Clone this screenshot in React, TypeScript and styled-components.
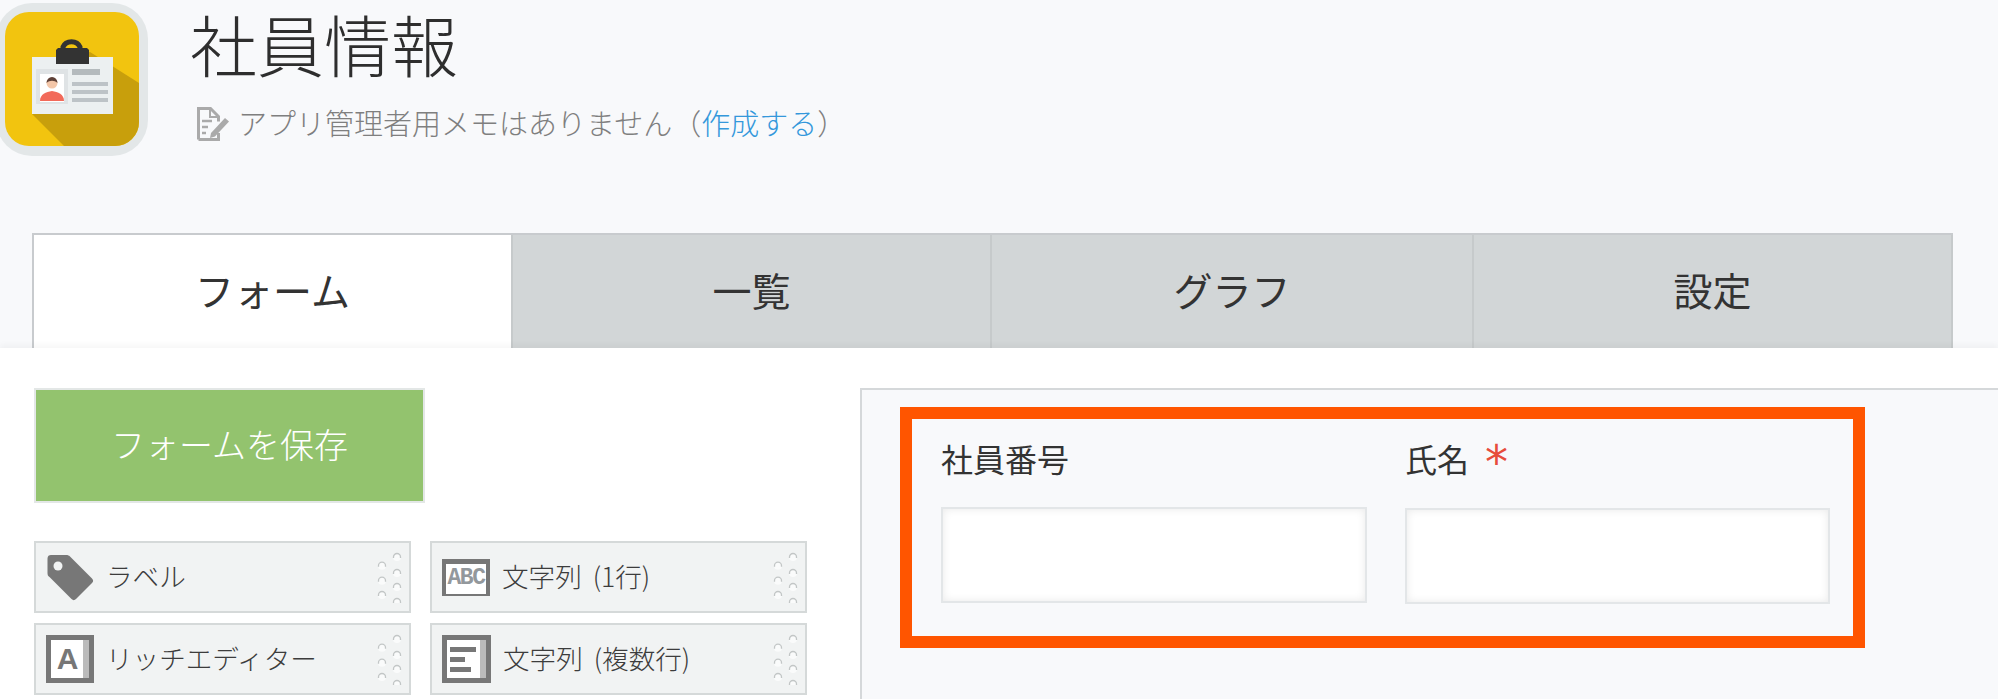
import React from 'react';
import styled, { createGlobalStyle } from 'styled-components';

const GlobalStyle = createGlobalStyle`
  html, body {
    margin: 0;
    height: 100%;
    overflow: hidden;
    background: #f8f9fb;
    font-family: "Noto Sans CJK JP", "Noto Sans", sans-serif;
    font-weight: 300;
    color: #333;
  }
  * { box-sizing: border-box; }
`;

const Page = styled.div`
  display: flex;
  flex-direction: column;
  height: 100vh;
  overflow: hidden;
`;

const Header = styled.header`
  display: flex;
  flex: 0 0 233px;
  align-items: flex-start;
`;

const AppIcon = styled.svg`
  flex: 0 0 152px;
  width: 152px;
  height: 153px;
  margin: 3px 42px 0 -4px;
`;

const TitleBlock = styled.div`
  flex: 1;
  padding-top: 3px;
`;

const Title = styled.h1`
  margin: 0 0 24px;
  font-size: 67px;
  line-height: 80px;
  font-weight: 300;
  color: #2e2e2e;
`;

const MemoRow = styled.div`
  display: flex;
  align-items: flex-start;
  gap: 8px;
  margin: 0 0 0 7px;
  height: 34px;
  font-size: 29px;
  line-height: 30px;
  color: #7f7f7f;
`;

const MemoLink = styled.a`
  color: #3498db;
`;

const Tabs = styled.nav`
  display: grid;
  grid-template-columns: 479px 479px 482px 481px;
  flex: 0 0 115px;
  margin: 0 45px 0 32px;
  border-top: 2px solid #c8cbce;
`;

const Tab = styled.div<{ $active?: boolean }>`
  display: flex;
  align-items: center;
  justify-content: center;
  padding-bottom: 6px;
  font-size: 39px;
  font-weight: 400;
  background: ${({ $active }) => ($active ? '#fff' : '#d2d6d7')};
  border-left: 2px solid ${({ $active }) => ($active ? '#c8cbce' : '#c6cacb')};
  &:last-child {
    border-right: 2px solid #c6cacb;
  }
`;

const Main = styled.main`
  display: flex;
  flex: 1;
  padding-top: 40px;
  background: #fff;
  box-shadow: 0 -3px 6px rgba(0, 0, 0, 0.04);
`;

const Palette = styled.aside`
  flex: 0 0 860px;
  padding-left: 34px;
`;

const SaveButton = styled.button`
  display: block;
  width: 391px;
  height: 115px;
  padding: 0 0 5px;
  font-family: inherit;
  font-weight: 300;
  font-size: 34px;
  color: #fff;
  background: #93c36e;
  border: 2px solid #e3e7e6;
`;

const ItemGrid = styled.div`
  display: grid;
  grid-template-columns: 377px 377px;
  grid-auto-rows: 72px;
  gap: 10px 19px;
  margin-top: 38px;
`;

const Item = styled.div`
  display: flex;
  align-items: center;
  gap: 12px;
  padding: 0 5px 0 10px;
  font-size: 26.6px;
  color: #3c3c3c;
  background: #f1f3f3;
  border: 2px solid #d5d9d9;
`;

const ItemLabel = styled.span`
  margin-bottom: 4px;
  white-space: pre;
  word-spacing: 5px;
`;

const Grip = styled.svg`
  flex: 0 0 30px;
  width: 30px;
  height: 52px;
  margin-left: auto;
`;

const TagIcon = styled.svg`
  flex: 0 0 48px;
  width: 48px;
  height: 48px;
`;

const FrameIcon = styled.div<{ $short?: boolean }>`
  position: relative;
  display: flex;
  flex: 0 0 48px;
  align-items: center;
  justify-content: center;
  height: ${({ $short }) => ($short ? '37px' : '48px')};
  background: #fff;
  border: 5px solid #777;
  border-width: ${({ $short }) => ($short ? '5px 4px 2px' : '5px')};
`;

const IconLetters = styled.span`
  font-family: "Liberation Mono", monospace;
  font-size: 23px;
  line-height: 1;
  letter-spacing: -1.5px;
  font-weight: 700;
  color: #93989c;
`;

const IconCapital = styled.span`
  margin-right: 5px;
  font-family: "Liberation Sans", sans-serif;
  font-size: 30px;
  line-height: 1;
  font-weight: 700;
  color: #777;
`;

const IconStrip = styled.i`
  position: absolute;
  top: 0;
  right: 0;
  bottom: 0;
  width: 6px;
  background: #bbb;
`;

const IconLines = styled.div`
  display: flex;
  flex-direction: column;
  gap: 5px;
  width: 100%;
  padding: 0 10px 0 3px;
`;

const IconLine = styled.i<{ $width: number }>`
  display: block;
  width: ${({ $width }) => $width}px;
  height: 5px;
  background: #777;
`;

const Canvas = styled.section`
  flex: 1;
  padding: 17px 0 0 38px;
  background: #f8f9fb;
  border: solid #d5d8da;
  border-width: 2px 0 0 2px;
`;

const FormRow = styled.div`
  display: flex;
  gap: 38px;
  width: 965px;
  padding: 23px 0 32px 29px;
  border: 12px solid #ff5500;
`;

const Field = styled.div<{ $width: number; $inputGap: number }>`
  width: ${({ $width }) => $width}px;
  & > input {
    margin-top: ${({ $inputGap }) => $inputGap}px;
  }
`;

const FieldLabel = styled.label`
  display: block;
  height: 32px;
  font-size: 32px;
  font-weight: 400;
  line-height: 32px;
  color: #333;
`;

const Required = styled.span`
  display: inline-block;
  margin: 4px 0 0 16px;
  font-family: "DejaVu Sans", sans-serif;
  font-size: 46px;
  font-weight: 400;
  line-height: 32px;
  vertical-align: top;
  color: #e74c3c;
`;

const TextBox = styled.input`
  display: block;
  width: 100%;
  height: 96px;
  background: #fff;
  border: 2px solid #e3e6e8;
  box-shadow: inset 0 0 9px rgba(0, 0, 0, 0.09);
  outline: none;
`;

const LogoIcon = () => (
  <AppIcon viewBox="-4 3 152 153">
    <defs>
      <clipPath id="logo-clip">
        <rect x="5" y="12" width="134" height="134" rx="24" />
      </clipPath>
    </defs>
    <rect x="-4" y="3" width="152" height="153" rx="36" fill="#e3e7e8" />
    <rect x="5" y="12" width="134" height="134" rx="24" fill="#f2c40f" />
    <polygon points="32,114 64,146 139,146 139,83 90,52 60,60" fill="#c89f0c" clipPath="url(#logo-clip)" />
    <rect x="32" y="57" width="81" height="57" fill="#ecf0f1" />
    <path d="M63 50v-3a9 8 0 0 1 17 0v3" fill="none" stroke="#333" strokeWidth="5" />
    <path d="M58 48h29l2 2v14H56V50z" fill="#333" />
    <rect x="36" y="69" width="32" height="35" fill="#dfe3e5" />
    <rect x="40" y="74" width="24" height="28" fill="#fff" />
    <path d="M40 101c0-7 6-9 12-10 6 1 12 3 12 10z" fill="#f26a5a" />
    <circle cx="52" cy="83" r="5.500" fill="#f3c6a8" />
    <path d="M46.500 83a5.500 6 0 0 1 11 0c-3-3-8-3-11 0z" fill="#5d4037" />
    <rect x="72" y="69" width="28" height="6" fill="#b4babd" />
    <rect x="72" y="82" width="36" height="4" fill="#bdc3c7" />
    <rect x="72" y="90" width="36" height="4" fill="#bdc3c7" />
    <rect x="72" y="98" width="36" height="4" fill="#bdc3c7" />
  </AppIcon>
);

const MemoIcon = () => (
  <svg width="33" height="34" viewBox="0 0 33 34" fill="none">
    <path d="M1.500 32.500V1.500h12l8 8v5M21.500 26v6.500H1.500" stroke="#aaa" strokeWidth="3" />
    <path d="M13 2v8h8" stroke="#aaa" strokeWidth="2" />
    <path d="M5 14h10M5 20h6M5 26h4" stroke="#aaa" strokeWidth="2.500" />
    <path d="M14 26l14-15 4 3.500-14 15-5 1.500z" fill="#aaa" />
  </svg>
);

const LabelIcon = () => (
  <TagIcon viewBox="0 0 48 48">
    <path
      d="M5 2h15c2 0 3 .5 4 1.500l22 22c1.500 1.500 1.500 3 0 4.500L30 46c-1.500 1.500-3 1.500-4.500 0l-22-22C2 23 1.500 22 1.500 20V5.500C1.500 3 3 2 5 2z"
      fill="#777"
    />
    <circle cx="12" cy="13" r="4.500" fill="#f1f3f3" />
  </TagIcon>
);

const leftDots = [10.7, 25.7, 40];
const rightDots = [2, 18, 32, 47];

const GripDots = () => (
  <Grip viewBox="0 -2 30 52">
    {[...leftDots.map((y) => [8, y]), ...rightDots.map((y) => [23, y])].map(([x, y]) => (
      <g key={`${x}-${y}`}>
        <circle cx={x} cy={y + 2} r="4" fill="#fafbfb" />
        <path d={`M${x - 3.5} ${y + 3}v-1a3.500 3.500 0 0 1 7 0v1`} fill="none" stroke="#c2c6c6" strokeWidth="1.300" />
      </g>
    ))}
  </Grip>
);

const App: React.FC = () => {
  return (
    <Page>
      <GlobalStyle />
      <Header>
        <LogoIcon />
        <TitleBlock>
          <Title>社員情報</Title>
          <MemoRow>
            <MemoIcon />
            <span>
              アプリ管理者用メモはありません（<MemoLink>作成する</MemoLink>）
            </span>
          </MemoRow>
        </TitleBlock>
      </Header>
      <Tabs>
        <Tab $active>フォーム</Tab>
        <Tab>一覧</Tab>
        <Tab>グラフ</Tab>
        <Tab>設定</Tab>
      </Tabs>
      <Main>
        <Palette>
          <SaveButton>フォームを保存</SaveButton>
          <ItemGrid>
            <Item>
              <LabelIcon />
              <ItemLabel>ラベル</ItemLabel>
              <GripDots />
            </Item>
            <Item>
              <FrameIcon $short>
                <IconLetters>ABC</IconLetters>
              </FrameIcon>
              <ItemLabel>文字列 (1行)</ItemLabel>
              <GripDots />
            </Item>
            <Item>
              <FrameIcon>
                <IconCapital>A</IconCapital>
                <IconStrip />
              </FrameIcon>
              <ItemLabel>リッチエディター</ItemLabel>
              <GripDots />
            </Item>
            <Item>
              <FrameIcon>
                <IconLines>
                  <IconLine $width={26} />
                  <IconLine $width={15} />
                  <IconLine $width={21} />
                </IconLines>
                <IconStrip />
              </FrameIcon>
              <ItemLabel>文字列 (複数行)</ItemLabel>
              <GripDots />
            </Item>
          </ItemGrid>
        </Palette>
        <Canvas>
          <FormRow>
            <Field $width={426} $inputGap={33}>
              <FieldLabel>社員番号</FieldLabel>
              <TextBox />
            </Field>
            <Field $width={425} $inputGap={34}>
              <FieldLabel>
                氏名<Required>*</Required>
              </FieldLabel>
              <TextBox />
            </Field>
          </FormRow>
        </Canvas>
      </Main>
    </Page>
  );
};

export default App;
